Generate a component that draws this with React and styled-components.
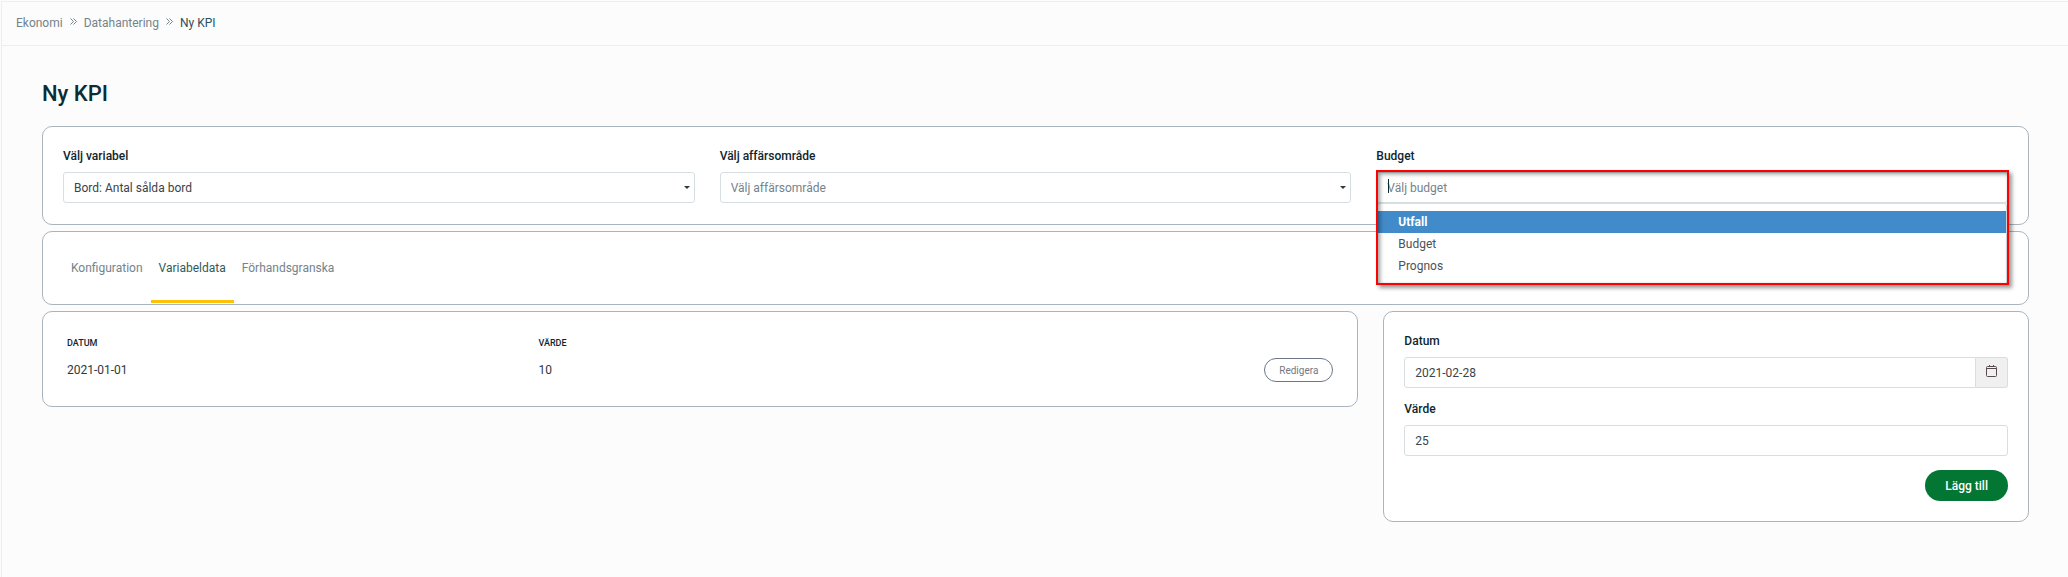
import React from 'react';
import styled, { createGlobalStyle } from 'styled-components';

const GlobalStyle = createGlobalStyle`
    * {
        box-sizing: border-box;
    }
    body {
        margin: 0;
        background: #fcfcfc;
        color: #12263f;
        font-family: Roboto, "Liberation Sans", sans-serif;
        font-size: 12px;
        line-height: 18px;
    }
    input, select, button {
        font-family: inherit;
        font-size: inherit;
    }
`;
const Page = styled.div`
    min-height: 100vh;
    margin-left: 1px;
    border-left: 1px solid #eeeeee;
`;
const TopBar = styled.nav`
    margin-top: 1px;
    height: 45px;
    padding: 0 14px 2px;
    display: flex;
    align-items: center;
    gap: 7px;
    border-top: 1px solid #eeeeee;
    border-bottom: 1px solid #eeeeee;
    svg {
        margin-bottom: 2px;
    }
`;
const Crumb = styled.a`
    color: ${props => props.$current ? '#2f4f5c' : '#74838b'};
    text-decoration: none;
`;
const Content = styled.main`
    padding: 32px 39px 40px 40px;
`;
const Title = styled.h1`
    margin: 0 0 16px;
    font-size: 22px;
    line-height: 32px;
    font-weight: 500;
    color: #0d2c33;
`;
const Stack = styled.div`
    display: flex;
    flex-direction: column;
    gap: 6px;
`;
const Card = styled.section`
    background: #fff;
    border: 1px solid #aab4bd;
    border-radius: 10px;
    padding: 20px;
`;
const Filters = styled(Card)`
    display: grid;
    grid-template-columns: repeat(3, 1fr);
    gap: 25px;
    padding-bottom: 21px;
`;
const Columns = styled.div`
    display: grid;
    grid-template-columns: repeat(12, 1fr);
    column-gap: 25px;
    align-items: start;
`;
const TableCard = styled(Card)`
    grid-column: span 8;
`;
const FormCard = styled(Card)`
    grid-column: span 4;
    display: flex;
    flex-direction: column;
    gap: 12px;
`;
const Label = styled.label`
    display: block;
    margin-bottom: 7px;
    font-weight: 500;
    color: #10262e;
`;
const Control = styled.div`
    position: relative;
    display: flex;
`;
const Input = styled.input`
    flex: 1;
    min-width: 0;
    height: 31px;
    padding: 0 10px;
    background: #fff;
    border: 1px solid #d5dfe2;
    border-radius: 3px;
    color: #3a444a;
    outline: none;
    &::placeholder {
        color: #74838b;
        opacity: 1;
    }
`;
const DateInput = styled(Input)`
    border-radius: 3px 0 0 3px;
`;
const Select = styled(Input).attrs({ as: 'select' })`
    appearance: none;
    color: ${props => props.$empty ? '#74838b' : '#3a444a'};
`;
const Arrow = styled.span`
    position: absolute;
    right: 5px;
    top: 14px;
    border: 3px solid transparent;
    border-top-color: #2b3a42;
    border-bottom: 0;
    pointer-events: none;
`;
const Cursor = styled.span`
    position: absolute;
    left: 12px;
    top: 7px;
    width: 1px;
    height: 14px;
    background: #0d2c33;
`;
const Menu = styled.ul`
    position: absolute;
    z-index: 1;
    top: 31px;
    left: 1px;
    right: 1px;
    margin: 0;
    padding: 7px 0;
    height: 82px;
    list-style: none;
    background: #fff;
    border: 1px solid #d5dfe2;
    border-radius: 3px;
`;
const Option = styled.li`
    padding: 0 20px;
    line-height: 22px;
    color: ${props => props.$active ? '#fff' : '#4f4f55'};
    background: ${props => props.$active ? '#428bca' : 'transparent'};
    font-weight: ${props => props.$active ? 700 : 400};
`;
const Highlight = styled.div`
    position: absolute;
    z-index: 2;
    top: -2px;
    left: 0;
    right: -1px;
    height: 115px;
    border: 2px solid #ff0000;
    box-shadow: 3px 3px 4px rgba(0, 0, 0, 0.4), inset 2px 2px 4px rgba(0, 0, 0, 0.4);
    pointer-events: none;
`;
const Tabs = styled(Card)`
    display: flex;
    height: 74px;
    padding: 0 20px;
`;
const Tab = styled.button`
    padding: 0 8px;
    background: none;
    border: solid transparent;
    border-width: 3px 0;
    border-bottom-color: ${props => props.$active ? '#ffc107' : 'transparent'};
    margin-bottom: 1px;
    color: ${props => props.$active ? '#2f5a5c' : '#74838b'};
`;
const Table = styled.table`
    width: 100%;
    border-collapse: collapse;
    table-layout: fixed;
`;
const Th = styled.th`
    width: ${props => props.$width};
    padding: 2px 4px;
    text-align: left;
    font-size: 9px;
    font-weight: 500;
    line-height: 18px;
    text-transform: uppercase;
    color: #10262e;
`;
const Td = styled.td`
    padding: 4px;
    height: 32px;
    text-align: ${props => props.$right ? 'right' : 'left'};
    color: #2b3a42;
`;
const OutlineButton = styled.button`
    display: inline-block;
    vertical-align: middle;
    height: 24px;
    padding: 0 14px;
    background: #fff;
    border: 1px solid #6c7688;
    border-radius: 12px;
    font-size: 10px;
    color: #74777f;
`;
const CalendarButton = styled.button`
    display: flex;
    align-items: center;
    justify-content: center;
    width: 32px;
    height: 31px;
    padding: 0 0 4px;
    background: #f0f0f0;
    border: 1px solid #d5dfe2;
    border-left: 0;
    border-radius: 0 3px 3px 0;
`;
const SubmitButton = styled.button`
    align-self: flex-end;
    margin-top: 2px;
    height: 31px;
    padding: 0 20px;
    background: #047634;
    border: 0;
    border-radius: 16px;
    font-weight: 500;
    color: #fff;
`;

const Separator = () => (
    <svg width="7" height="7" viewBox="0 0 7 7" fill="none" stroke="#74838b" aria-hidden="true">
        <path d="M0.5 0.5L3.5 3.5L0.5 6.5M3.5 0.5L6.5 3.5L3.5 6.5" />
    </svg>
);

const CalendarIcon = () => (
    <svg width="11" height="12" viewBox="0 0 11 12" fill="none" stroke="#5a4a50" aria-hidden="true">
        <rect x="0.5" y="1.5" width="10" height="10" rx="1" />
        <path d="M0.5 3.5H10.5M3.5 0V1.5M7.5 0V1.5" />
    </svg>
);

const options = ['Utfall', 'Budget', 'Prognos'];
const tabs = ['Konfiguration', 'Variabeldata', 'Förhandsgranska'];
const rows = [{ date: '2021-01-01', value: '10' }];

export default function App() {
    return (
        <>
            <GlobalStyle />
            <Page>
                <TopBar>
                    <Crumb href="#ekonomi">Ekonomi</Crumb>
                    <Separator />
                    <Crumb href="#datahantering">Datahantering</Crumb>
                    <Separator />
                    <Crumb href="#kpi" $current>Ny KPI</Crumb>
                </TopBar>
                <Content>
                    <Title>Ny KPI</Title>
                    <Stack>
                        <Filters>
                            <div>
                                <Label htmlFor="variable">Välj variabel</Label>
                                <Control>
                                    <Select id="variable">
                                        <option>Bord: Antal sålda bord</option>
                                    </Select>
                                    <Arrow />
                                </Control>
                            </div>
                            <div>
                                <Label htmlFor="area">Välj affärsområde</Label>
                                <Control>
                                    <Select id="area" $empty>
                                        <option>Välj affärsområde</option>
                                    </Select>
                                    <Arrow />
                                </Control>
                            </div>
                            <div>
                                <Label htmlFor="budget">Budget</Label>
                                <Control>
                                    <Input id="budget" role="combobox" aria-expanded="true" aria-controls="budget-menu" placeholder="Välj budget" />
                                    <Cursor />
                                    <Menu id="budget-menu" role="listbox">
                                        {options.map((name, i) => (
                                            <Option key={name} role="option" aria-selected={i === 0} $active={i === 0}>{name}</Option>
                                        ))}
                                    </Menu>
                                    <Highlight />
                                </Control>
                            </div>
                        </Filters>
                        <Tabs>
                            {tabs.map((name, i) => (
                                <Tab key={name} type="button" $active={i === 1}>{name}</Tab>
                            ))}
                        </Tabs>
                        <Columns>
                            <TableCard>
                                <Table>
                                    <thead>
                                        <tr>
                                            <Th $width="37%">Datum</Th>
                                            <Th $width="37%">Värde</Th>
                                            <Th />
                                        </tr>
                                    </thead>
                                    <tbody>
                                        {rows.map(row => (
                                            <tr key={row.date}>
                                                <Td>{row.date}</Td>
                                                <Td>{row.value}</Td>
                                                <Td $right><OutlineButton type="button">Redigera</OutlineButton></Td>
                                            </tr>
                                        ))}
                                    </tbody>
                                </Table>
                            </TableCard>
                            <FormCard as="form">
                                <div>
                                    <Label htmlFor="date">Datum</Label>
                                    <Control>
                                        <DateInput id="date" defaultValue="2021-02-28" />
                                        <CalendarButton type="button" aria-label="Kalender"><CalendarIcon /></CalendarButton>
                                    </Control>
                                </div>
                                <div>
                                    <Label htmlFor="value">Värde</Label>
                                    <Control>
                                        <Input id="value" defaultValue="25" />
                                    </Control>
                                </div>
                                <SubmitButton type="button">Lägg till</SubmitButton>
                            </FormCard>
                        </Columns>
                    </Stack>
                </Content>
            </Page>
        </>
    );
}
